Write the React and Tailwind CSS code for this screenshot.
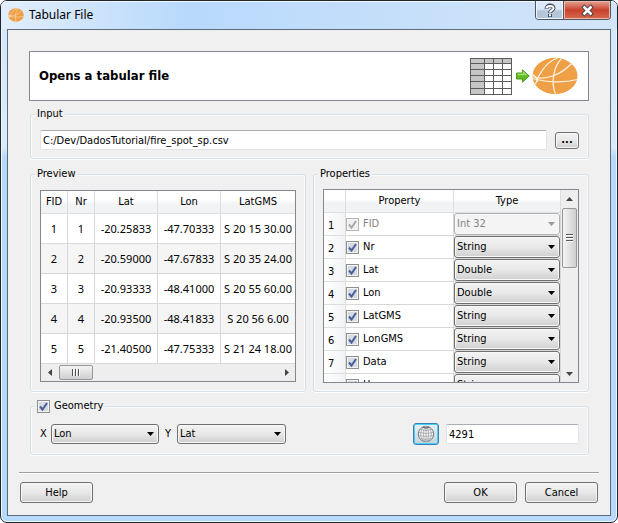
import { useState } from "react";
import clsx from "clsx";

const PREVIEW_COLUMNS = ["FID", "Nr", "Lat", "Lon", "LatGMS"];

const PREVIEW_ROWS = [
  ["1", "1", "-20.25833", "-47.70333", "S 20 15 30.00"],
  ["2", "2", "-20.59000", "-47.67833", "S 20 35 24.00"],
  ["3", "3", "-20.93333", "-48.41000", "S 20 55 60.00"],
  ["4", "4", "-20.93500", "-48.41833", "S 20 56 6.00"],
  ["5", "5", "-21.40500", "-47.75333", "S 21 24 18.00"],
];

const PROPERTIES = [
  { name: "FID",    type: "Int 32", locked: true },
  { name: "Nr",     type: "String" },
  { name: "Lat",    type: "Double" },
  { name: "Lon",    type: "Double" },
  { name: "LatGMS", type: "String" },
  { name: "LonGMS", type: "String" },
  { name: "Data",   type: "String" },
  { name: "Hora",   type: "String" },
];

const TYPES = ["Int 32", "String", "Double"];
const FIELDS = ["Nr", "Lat", "Lon", "LatGMS", "LonGMS", "Data"];

function BallIcon({ className }) {
  return (
    <svg viewBox="0 0 46 38" preserveAspectRatio="none" className={className} aria-hidden="true">
      <ellipse cx="23" cy="19" rx="22.5" ry="18.2" fill="#ef9f45"/>
      <g fill="none" stroke="#fdf3e2" strokeWidth="1.2">
        <path d="M0.5 19.500 C13 24 29 18 39.500 6.500"/>
        <path d="M0.700 21.500 C14 25.500 32 26 45.300 22.500"/>
        <path d="M3.500 27 C6 18 14 5 25.500 1"/>
        <path d="M23.500 37 C19 27 21 10 29.500 1.500"/>
        <path d="M1 17.500 C4 19.500 5.500 22 5.500 25"/>
      </g>
    </svg>
  );
}

function TableIcon() {
  return (
    <svg viewBox="0 0 42 37" className="h-[37px] w-[42px]" aria-hidden="true">
      <rect width="42" height="37" fill="#fff"/>
      <path d="M0 0H42V5H0Z M0 5H14V37H0Z" fill="#c6c6c6"/>
      <path d="M0 .5H42 M0 5.500H42 M0 11.500H42 M0 17.500H42 M0 23.500H42 M0 30.500H42 M0 36.500H42 M.5 0V37 M14.500 0V37 M23.500 0V37 M32.500 0V37 M41.500 0V37" stroke="#5c5c5c" fill="none"/>
    </svg>
  );
}

function ArrowIcon() {
  return (
    <svg viewBox="0 0 14 14" className="h-3.5 w-3.5" aria-hidden="true">
      <path d="M.5 4H6.500V.8L13.200 7L6.500 13.200V10H.5Z" fill="#62bb22" stroke="#4b9a1c"/>
      <path d="M1.500 5.500H7.500V3.500L10.500 6.300" stroke="#a9e273" strokeWidth="1.300" fill="none"/>
    </svg>
  );
}

function GlobeIcon() {
  return (
    <svg viewBox="0 0 18 18" className="h-[18px] w-[18px]" aria-hidden="true">
      <circle cx="9" cy="9" r="7.700" fill="#f3f3f3" stroke="#74797d"/>
      <g fill="none" stroke="#a2a6a9" strokeWidth=".8">
        <ellipse cx="9" cy="9" rx="2.500" ry="7.500"/>
        <ellipse cx="9" cy="9" rx="5.300" ry="7.500"/>
        <path d="M9 1.500V16.500 M3.500 4.500Q9 6.500 14.500 4.500 M2 7.500Q9 9.500 16 7.500 M2 10.500Q9 12.500 16 10.500 M3.500 13.500Q9 15.500 14.500 13.500"/>
      </g>
      <path d="M6 2.200Q9 4 12 2.200" stroke="#555" fill="none"/>
    </svg>
  );
}

function Group({ title, className, children }) {
  return (
    <fieldset className={clsx("min-w-0 rounded-[3px] border border-[#d5dfe8] px-[9px] shadow-[inset_0_0_0_1px_#fafafa,0_1px_0_#fff]", className)}>
      <legend className="-ml-[5px] h-4 bg-[#f0f0f0] px-0.5 leading-4">{title}</legend>
      {children}
    </fieldset>
  );
}

function Check({ className, ...props }) {
  return (
    <span className={clsx("relative block h-[13px] w-[13px] shrink-0", className)}>
      <input
        type="checkbox"
        className="peer block h-[13px] w-[13px] appearance-none border border-[#8e8f8f] bg-[#d5dae3] shadow-[inset_0_0_0_1px_#f4f4f4] disabled:border-[#b5b5b5] disabled:bg-[#f0f0f0]"
        {...props}
      />
      <svg viewBox="0 0 13 13" className="pointer-events-none absolute inset-0 hidden text-[#4a5f97] peer-checked:block peer-disabled:text-[#a9a9a9]" aria-hidden="true">
        <path d="M3 6.500L5.500 9.500L10 3" fill="none" stroke="currentColor" strokeWidth="2"/>
      </svg>
    </span>
  );
}

function Combo({ id, label, options, value, onChange, disabled, className }) {
  return (
    <div className={clsx("relative", className)}>
      <select
        id={id}
        aria-label={label}
        value={value}
        onChange={e => onChange(e.target.value)}
        disabled={disabled}
        className="block h-full w-full appearance-none rounded-[3px] border border-[#707070] bg-linear-to-b from-[#f3f3f3] from-0% via-[#e8e8e8] via-50% to-[#cfcfcf] pl-[2px] pr-5 text-black shadow-[inset_0_0_0_1px_#f8f8f8] disabled:border-[#adb2b5] disabled:bg-none disabled:bg-[#f4f4f4] disabled:text-[#838383] disabled:opacity-100"
      >
        {options.map(o => <option key={o}>{o}</option>)}
      </select>
      <svg viewBox="0 0 7 4" className={clsx("pointer-events-none absolute top-1/2 right-[5px] -mt-0.5 h-1 w-[7px]", disabled ? "text-[#9a9a9a]" : "text-black")} aria-hidden="true">
        <path d="M0 0H7L3.500 4Z" fill="currentColor"/>
      </svg>
    </div>
  );
}

function DialogButton({ children }) {
  return (
    <button
      type="button"
      className="h-[21px] w-[73px] rounded-[3px] border border-[#707070] bg-linear-to-b from-[#f3f3f3] from-0% via-[#e8e8e8] via-50% to-[#cfcfcf] leading-4 shadow-[inset_0_0_0_1px_#f8f8f8]"
    >
      {children}
    </button>
  );
}

function ScrollArrow({ label, points, className }) {
  return (
    <button type="button" aria-label={label} className={clsx("flex shrink-0 items-center justify-center", className)}>
      <svg viewBox="0 0 7 7" className="h-[7px] w-[7px]">
        <polygon points={points} fill="#444"/>
      </svg>
    </button>
  );
}

function PreviewTable() {
  return (
    <div className="mt-2 flex h-48 flex-col overflow-hidden border border-[#828790] bg-white">
      <div className="min-h-0 flex-1 overflow-hidden">
        <table className="w-full table-fixed border-separate border-spacing-0 text-center">
          <colgroup>
            <col className="w-[27px]"/>
            <col className="w-[27px]"/>
            <col className="w-[63px]"/>
            <col className="w-[63px]"/>
            <col/>
          </colgroup>
          <thead>
            <tr>
              {PREVIEW_COLUMNS.map(c => (
                <th key={c} className="h-[23px] border-r border-b border-[#dcdfe2] bg-linear-to-b from-white from-40% to-[#f2f3f5] to-60% p-0 font-normal last:border-r-0">
                  {c}
                </th>
              ))}
            </tr>
          </thead>
          <tbody className="font-['Noto_Sans',sans-serif]">
            {PREVIEW_ROWS.map(row => (
              <tr key={row[0]} className="even:bg-[#f5f5f5]">
                {row.map((cell, i) => (
                  <td key={i} className="h-[30px] border-r border-b border-[#d8d8d8] p-0 whitespace-nowrap last:border-r-0">
                    {cell}
                  </td>
                ))}
              </tr>
            ))}
          </tbody>
        </table>
      </div>
      {/* Horizontal scroll bar */}
      <div className="flex h-[17px] shrink-0 bg-[#eeeeee]">
        <ScrollArrow label="Scroll left" points="5,0 5,7 1,3.5" className="w-[18px]"/>
        <div className="flex-1 py-px">
          <div className="flex h-[15px] w-[34px] items-center justify-center gap-px rounded-[2px] border border-[#979797] bg-linear-to-b from-[#f4f4f4] to-[#cfcfcf]">
            <span className="h-[7px] w-0.5 border-r border-white bg-[#555]"/>
            <span className="h-[7px] w-0.5 border-r border-white bg-[#555]"/>
            <span className="h-[7px] w-0.5 border-r border-white bg-[#555]"/>
          </div>
        </div>
        <ScrollArrow label="Scroll right" points="2,0 2,7 6,3.5" className="w-[18px]"/>
      </div>
    </div>
  );
}

function PropertiesTable() {
  const [rows, setRows] = useState(PROPERTIES.map(p => ({ ...p, checked: true })));

  const update = (name, patch) =>
    setRows(rows.map(r => (r.name === name ? { ...r, ...patch } : r)));

  return (
    <div className="mt-[7px] flex h-[194px] overflow-hidden border border-[#828790] bg-white">
      <div className="min-w-0 flex-1 overflow-hidden">
        <table className="w-full table-fixed border-separate border-spacing-0">
          <colgroup>
            <col className="w-[22px]"/>
            <col/>
            <col className="w-[107px]"/>
          </colgroup>
          <thead>
            <tr>
              {["", "Property", "Type"].map(c => (
                <th key={c} className="h-[23px] border-r border-b border-[#dcdfe2] bg-linear-to-b from-white from-40% to-[#f2f3f5] to-60% p-0 font-normal">
                  {c}
                </th>
              ))}
            </tr>
          </thead>
          <tbody>
            {rows.map((r, i) => (
              <tr key={r.name}>
                <th className="h-[23px] border-r border-b border-[#dcdfe2] bg-linear-to-r from-white to-[#f2f3f5] p-0 pt-1 pl-1 text-left font-normal">
                  {i + 1}
                </th>
                <td className="h-[23px] border-r border-b border-[#d8d8d8] p-0">
                  <label className={clsx("flex items-center gap-1", r.locked && "text-[#838383]")}>
                    <Check
                      checked={r.checked}
                      disabled={r.locked}
                      onChange={e => update(r.name, { checked: e.target.checked })}
                    />
                    {r.name}
                  </label>
                </td>
                <td className="h-[23px] border-r border-b border-[#d8d8d8] p-0">
                  <Combo
                    label={`Type of ${r.name}`}
                    options={TYPES}
                    value={r.type}
                    disabled={r.locked}
                    onChange={type => update(r.name, { type })}
                    className="h-[22px]"
                  />
                </td>
              </tr>
            ))}
          </tbody>
        </table>
      </div>
      {/* Vertical scroll bar */}
      <div className="flex w-[17px] shrink-0 flex-col bg-[#eeeeee]">
        <ScrollArrow label="Scroll up" points="0,5 7,5 3.5,1" className="h-[18px]"/>
        <div className="flex-1 px-px">
          <div className="flex h-[60px] flex-col items-center justify-center gap-px rounded-[2px] border border-[#979797] bg-linear-to-r from-[#f4f4f4] to-[#cfcfcf]">
            <span className="h-0.5 w-[7px] border-b border-white bg-[#555]"/>
            <span className="h-0.5 w-[7px] border-b border-white bg-[#555]"/>
            <span className="h-0.5 w-[7px] border-b border-white bg-[#555]"/>
          </div>
        </div>
        <ScrollArrow label="Scroll down" points="0,2 7,2 3.5,6" className="h-[18px]"/>
      </div>
    </div>
  );
}

export default function App() {
  const [path,     setPath]     = useState("C:/Dev/DadosTutorial/fire_spot_sp.csv");
  const [geometry, setGeometry] = useState(true);
  const [xField,   setXField]   = useState("Lon");
  const [yField,   setYField]   = useState("Lat");
  const [srid,     setSrid]     = useState("4291");

  return (
    <div className="flex min-h-screen flex-col rounded-[7px] border border-[#20262e] bg-linear-to-b from-[#d3e6fb] from-0% via-[#dbeafa] via-28% to-[#b7d9fc] to-30% px-1.5 pb-1.5 font-['DejaVu_Sans_Condensed','DejaVu_Sans',sans-serif] text-[11px] leading-4 text-black shadow-[inset_0_0_0_1px_#f2f8ff]">

      {/* Title bar */}
      <header className="-mx-1.5 flex h-7 shrink-0 items-start rounded-t-[6px] bg-linear-to-r from-[#e2eefb] from-0% via-[#b8d9fc] via-30% to-[#d3e5f8] pr-1.5 pl-[7px] shadow-[inset_0_1px_0_#f2f8ff]">
        <BallIcon className="mt-[7px] h-3.5 w-4"/>
        <h1 className="mt-1.5 ml-[5px] flex-1 font-['Noto_Sans',sans-serif] text-[12px]">Tabular File</h1>
        <div className="flex h-[19px] overflow-hidden rounded-b-[4px] border border-t-0 border-[#4d5560]">
          <button type="button" aria-label="Help" className="flex w-7 items-center justify-center border-r border-[#4d5560] bg-linear-to-b from-[#dce8f5] from-45% to-[#b3c6da] to-55% shadow-[inset_0_0_0_1px_#eef5fc]">
            <svg viewBox="0 0 10 13" className="h-[13px] w-2.5 overflow-visible" fill="none">
              <path d="M1.500 4.800C1.500 .6 8.500 .6 8.500 4.300C8.500 6.500 5 6.300 5 9M5 10V13" stroke="#4a4f5c" strokeWidth="4"/>
              <path d="M1.500 4.200C1.500 1.200 8.500 1.200 8.500 4.300C8.500 6.500 5 6.300 5 8.500M5 10.300V12.300" stroke="#fff" strokeWidth="2"/>
            </svg>
          </button>
          <button type="button" aria-label="Close" className="flex w-[46px] items-center justify-center bg-linear-to-b from-[#e2a294] from-0% via-[#c9402c] via-50% to-[#d5694f] shadow-[inset_0_0_0_1px_#efb7aa]">
            <svg viewBox="0 0 13 11" className="h-[11px] w-[13px] overflow-visible" fill="none">
              <path d="M1.700 .7L11.300 10.300M11.300 .7L1.700 10.300" stroke="#4a3f4c" strokeWidth="4.400"/>
              <path d="M2.500 1.500L10.500 9.500M10.500 1.500L2.500 9.500" stroke="#fff" strokeWidth="2.500"/>
            </svg>
          </button>
        </div>
      </header>

      <main className="flex flex-1 flex-col border border-[#5d6b79] bg-[#f0f0f0] pb-3">
        <div className="px-[21px] pt-[21px]">

          {/* Banner */}
          <div className="flex h-[50px] items-center border border-[#828790] bg-white pr-2.5 pl-[9px]">
            <h2 className="flex-1 text-[13px] font-bold">Opens a tabular file</h2>
            <TableIcon/>
            <div className="mr-0.5 ml-1"><ArrowIcon/></div>
            <BallIcon className="h-[38px] w-[46px]"/>
          </div>

          <div className="pl-px">
            {/* Input */}
            <Group title="Input" className="mt-[5px] h-[53px]">
              <div className="mt-2 flex items-center gap-2">
                <input
                  type="text"
                  aria-label="Input file"
                  value={path}
                  onChange={e => setPath(e.target.value)}
                  className="h-5 min-w-0 flex-1 rounded-[2px] border border-[#e2e3ea] border-t-[#abadb3] bg-white px-0.5"
                />
                <button type="button" aria-label="Browse" className="h-[17px] w-6 rounded-[3px] border border-[#707070] bg-linear-to-b from-[#f3f3f3] from-0% via-[#e8e8e8] via-50% to-[#cfcfcf] font-bold leading-3 shadow-[inset_0_0_0_1px_#f8f8f8]">
                  ...
                </button>
              </div>
            </Group>

            <div className="mt-[7px] grid grid-cols-2 gap-[7px]">
              <Group title="Preview" className="h-[226px]">
                <PreviewTable/>
              </Group>
              <Group title="Properties" className="h-[226px]">
                <PropertiesTable/>
              </Group>
            </div>

            {/* Geometry */}
            <Group
              className="mt-1.5 h-[57px]"
              title={
                <label className="flex h-4 items-center gap-1">
                  <Check checked={geometry} onChange={e => setGeometry(e.target.checked)}/>
                  Geometry
                </label>
              }
            >
              <div className="mt-[9px] flex items-center">
                <label htmlFor="x-field" className="w-[11px]">X</label>
                <Combo id="x-field" options={FIELDS} value={xField} onChange={setXField} className="h-5 w-[108px]"/>
                <label htmlFor="y-field" className="ml-1.5 w-3">Y</label>
                <Combo id="y-field" options={FIELDS} value={yField} onChange={setYField} className="h-5 w-[109px]"/>
                <button type="button" aria-label="Choose SRID" className="ml-auto flex h-[22px] w-[26px] items-center justify-center rounded-[3px] border border-[#3c7fb1] bg-linear-to-b from-[#eaf0f4] to-[#c3d3dd] shadow-[inset_0_0_0_1px_#48d0f8]">
                  <GlobeIcon/>
                </button>
                <input
                  type="text"
                  aria-label="SRID"
                  value={srid}
                  onChange={e => setSrid(e.target.value)}
                  className="ml-[7px] h-5 w-[133px] rounded-[2px] border border-[#e2e3ea] border-t-[#abadb3] bg-white px-0.5"
                />
              </div>
            </Group>
          </div>
        </div>

        {/* Dialog buttons */}
        <footer className="mx-[11px] mt-[17px] border-t border-[#a0a0a0] pt-[9px] shadow-[inset_0_1px_0_#fff]">
          <div className="flex gap-2 px-px">
            <DialogButton>Help</DialogButton>
            <div className="flex-1"/>
            <DialogButton>OK</DialogButton>
            <DialogButton>Cancel</DialogButton>
          </div>
        </footer>
      </main>
    </div>
  );
}
